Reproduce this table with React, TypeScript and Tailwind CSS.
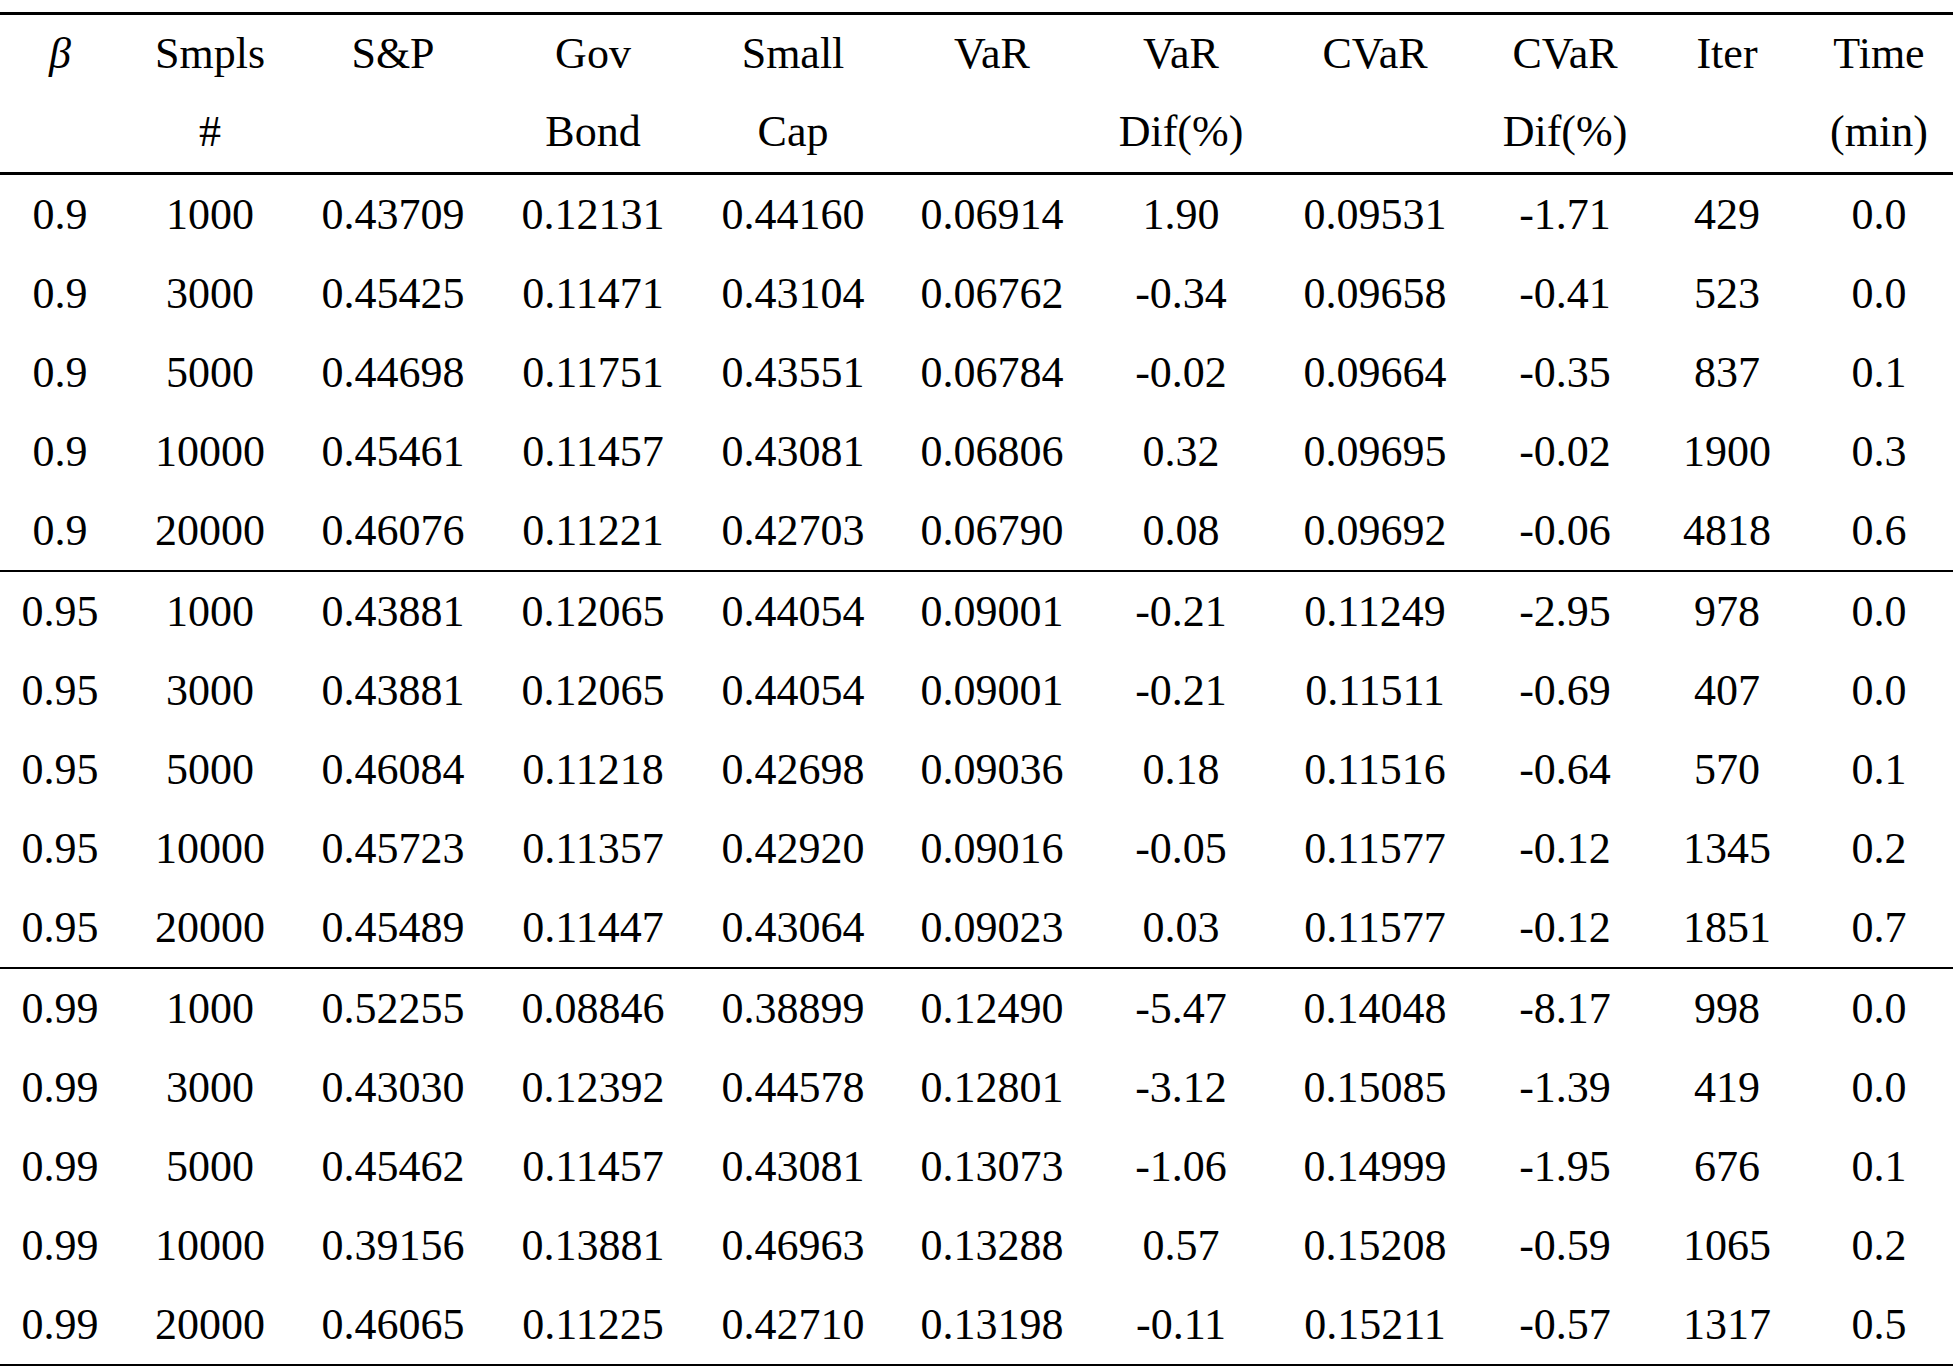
import React from "react";

const GRID =
  "grid grid-cols-[120px_180px_186px_214px_186px_212px_166px_222px_158px_166px_1fr]";

const head1 = ["β", "Smpls", "S&P", "Gov", "Small", "VaR", "VaR", "CVaR", "CVaR", "Iter", "Time"];
const head2 = ["", "#", "", "Bond", "Cap", "", "Dif(%)", "", "Dif(%)", "", "(min)"];

const groups: string[][][] = [
  [
    ["0.9", "1000", "0.43709", "0.12131", "0.44160", "0.06914", "1.90", "0.09531", "-1.71", "429", "0.0"],
    ["0.9", "3000", "0.45425", "0.11471", "0.43104", "0.06762", "-0.34", "0.09658", "-0.41", "523", "0.0"],
    ["0.9", "5000", "0.44698", "0.11751", "0.43551", "0.06784", "-0.02", "0.09664", "-0.35", "837", "0.1"],
    ["0.9", "10000", "0.45461", "0.11457", "0.43081", "0.06806", "0.32", "0.09695", "-0.02", "1900", "0.3"],
    ["0.9", "20000", "0.46076", "0.11221", "0.42703", "0.06790", "0.08", "0.09692", "-0.06", "4818", "0.6"],
  ],
  [
    ["0.95", "1000", "0.43881", "0.12065", "0.44054", "0.09001", "-0.21", "0.11249", "-2.95", "978", "0.0"],
    ["0.95", "3000", "0.43881", "0.12065", "0.44054", "0.09001", "-0.21", "0.11511", "-0.69", "407", "0.0"],
    ["0.95", "5000", "0.46084", "0.11218", "0.42698", "0.09036", "0.18", "0.11516", "-0.64", "570", "0.1"],
    ["0.95", "10000", "0.45723", "0.11357", "0.42920", "0.09016", "-0.05", "0.11577", "-0.12", "1345", "0.2"],
    ["0.95", "20000", "0.45489", "0.11447", "0.43064", "0.09023", "0.03", "0.11577", "-0.12", "1851", "0.7"],
  ],
  [
    ["0.99", "1000", "0.52255", "0.08846", "0.38899", "0.12490", "-5.47", "0.14048", "-8.17", "998", "0.0"],
    ["0.99", "3000", "0.43030", "0.12392", "0.44578", "0.12801", "-3.12", "0.15085", "-1.39", "419", "0.0"],
    ["0.99", "5000", "0.45462", "0.11457", "0.43081", "0.13073", "-1.06", "0.14999", "-1.95", "676", "0.1"],
    ["0.99", "10000", "0.39156", "0.13881", "0.46963", "0.13288", "0.57", "0.15208", "-0.59", "1065", "0.2"],
    ["0.99", "20000", "0.46065", "0.11225", "0.42710", "0.13198", "-0.11", "0.15211", "-0.57", "1317", "0.5"],
  ],
];

export default function App() {
  return (
    <div className="w-[1953px] h-[1366px] overflow-hidden bg-white text-black font-['Liberation_Serif',serif] text-[44px] leading-[78px]">
      <div className="pt-[12px]">
        <div className="h-[3px] bg-black" />
        <div className={GRID + " h-[157px]"}>
          {head1.map((h, i) => (
            <div key={i} className={"flex flex-col items-center" + (i === 10 ? " pr-[5px]" : "")}>
              <div className={"h-[78px] whitespace-nowrap" + (i === 0 ? " italic" : "")}>{h}</div>
              <div className="h-[78px] whitespace-nowrap">{head2[i] || "\u00a0"}</div>
            </div>
          ))}
        </div>
        <div className="h-[3px] bg-black" />
        {groups.map((g, gi) => (
          <div key={gi}>
            {gi > 0 && <div className="h-[2px] bg-black" />}
            {g.map((row, ri) => (
              <div key={ri} className={GRID + " h-[79px] leading-[79px]"}>
                {row.map((c, ci) => (
                  <div key={ci} className={"text-center whitespace-nowrap" + (ci === 10 ? " pr-[5px]" : "")}>
                    {c}
                  </div>
                ))}
              </div>
            ))}
          </div>
        ))}
        <div className="h-[3px] bg-black" />
      </div>
    </div>
  );
}
